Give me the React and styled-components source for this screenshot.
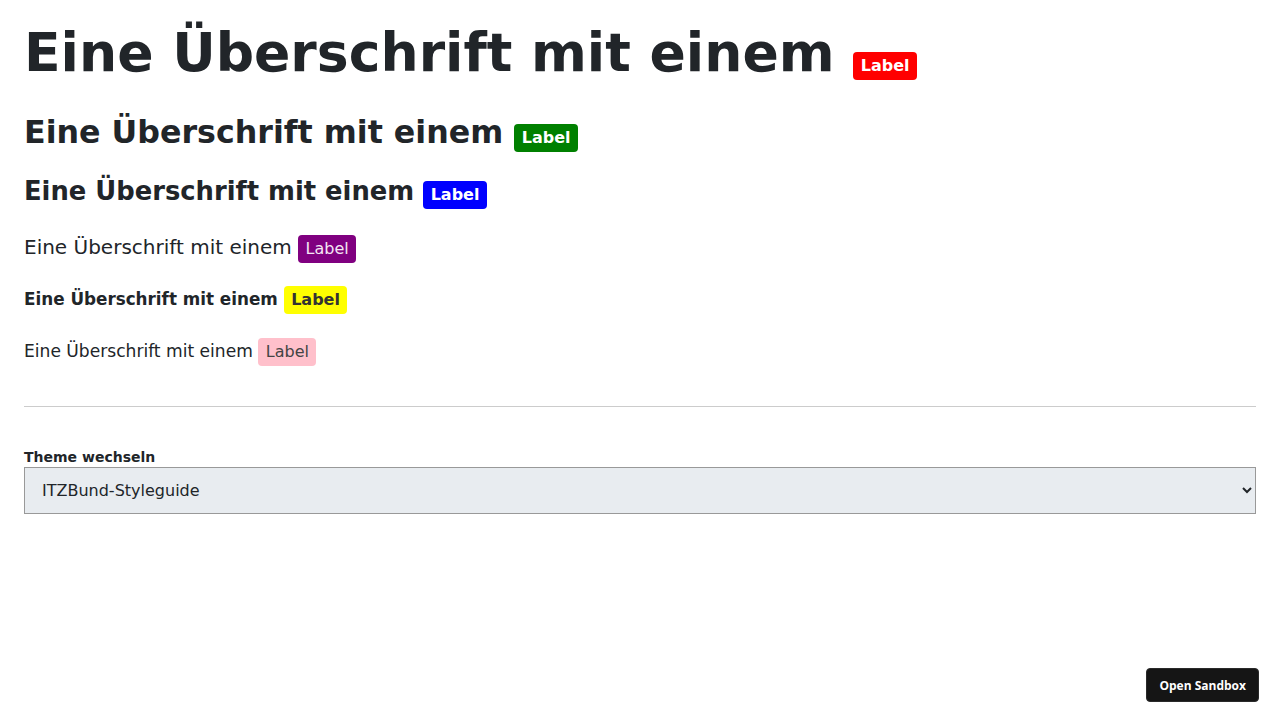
import React from "react";
import styled, { createGlobalStyle } from "styled-components";

const Global = createGlobalStyle`
  html, body { margin: 0; padding: 0; background: #fff; }
  body { font-family: "DejaVu Sans", Verdana, sans-serif; color: #212529; }
`;

const Page = styled.main`
  padding: 21px 24px 0 24px;
  display: flex;
  flex-direction: column;
`;

const Heading = styled.div`
  margin: ${p => p.$mt}px 0 0 0;
  font-size: ${p => p.$size}px;
  font-weight: ${p => (p.$bold ? 700 : 400)};
  line-height: 1.2;
  white-space: nowrap;
`;

const Label = styled.span`
  display: inline-block;
  vertical-align: baseline;
  height: 28px;
  line-height: 28px;
  padding: 0 7.5px;
  border-radius: 4px;
  background: ${p => p.$bg};
  color: ${p => p.$fg};
  font-family: "DejaVu Sans", sans-serif;
  font-size: 16px;
  font-weight: ${p => (p.$bold ? 700 : 400)};
`;

const Rule = styled.hr`
  border: 0;
  border-top: 1px solid #cccccc;
  margin: 40px 0 0 0;
  width: 100%;
`;

const Field = styled.div`
  margin-top: 42px;
  display: flex;
  flex-direction: column;
`;

const FieldLabel = styled.label`
  font-size: 14px;
  font-weight: 700;
  color: #212529;
  margin-bottom: 2px;
`;

const Select = styled.select`
  height: 47px;
  width: 100%;
  box-sizing: border-box;
  background: #e8ecf0;
  border: 1px solid #999;
  border-radius: 0;
  padding: 0 13px;
  font-family: "DejaVu Sans", sans-serif;
  font-size: 16px;
  color: #212529;
`;

const SandboxButton = styled.button`
  position: fixed;
  right: 21px;
  bottom: 18px;
  height: 34px;
  padding: 0 12px;
  background: #151515;
  color: #fff;
  border: 1px solid #2a2a2a;
  border-radius: 4px;
  font-family: "Open Sans", sans-serif;
  font-weight: 700;
  font-size: 12px;
`;

const rows = [
  { size: 53.6, bold: true, mt: 0, bg: "#ff0000", fg: "#fff", lb: true },
  { size: 31.7, bold: true, mt: 28, bg: "#008000", fg: "#fff", lb: true },
  { size: 25.8, bold: true, mt: 24, bg: "#0000ff", fg: "#fff", lb: true },
  { size: 20, bold: false, mt: 26, bg: "#800080", fg: "#f4e6f4", lb: false },
  { size: 16.8, bold: true, mt: 23, bg: "#ffff00", fg: "#333333", lb: true },
  { size: 17.1, bold: false, mt: 23.5, bg: "#ffc0cb", fg: "#444", lb: false },
];

export default function App() {
  return (
    <>
      <Global />
      <Page>
        {rows.map((r, i) => (
          <Heading key={i} $size={r.size} $bold={r.bold} $mt={r.mt}>
            Eine Überschrift mit einem{" "}
            <Label $bg={r.bg} $fg={r.fg} $bold={r.lb}>Label</Label>
          </Heading>
        ))}
        <Rule />
        <Field>
          <FieldLabel htmlFor="theme">Theme wechseln</FieldLabel>
          <Select id="theme" defaultValue="itz">
            <option value="itz">ITZBund-Styleguide</option>
          </Select>
        </Field>
      </Page>
      <SandboxButton>Open Sandbox</SandboxButton>
    </>
  );
}
